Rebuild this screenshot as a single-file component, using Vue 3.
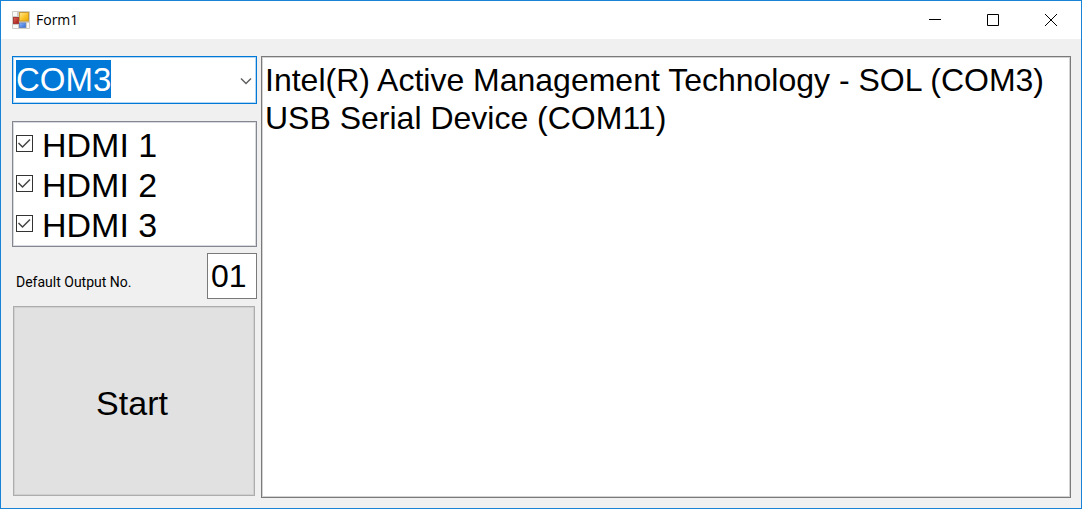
<script setup>
import { ref } from 'vue'

const port = ref('COM3')
const ports = ['COM3', 'COM11']
const outputs = ref([
  { name: 'HDMI 1', on: true },
  { name: 'HDMI 2', on: true },
  { name: 'HDMI 3', on: true },
])
const defaultOutput = ref('01')
const log = ref('Intel(R) Active Management Technology - SOL (COM3)\nUSB Serial Device (COM11)')
</script>

<template>
  <div class="window">
    <header class="titlebar">
      <svg class="app-icon" width="18" height="18" viewBox="0 0 18 18" aria-hidden="true">
        <defs>
          <linearGradient id="gold" x1="0" y1="0" x2="1" y2="1">
            <stop offset="0" stop-color="#ffe9a0" /><stop offset=".5" stop-color="#fdc62d" /><stop offset="1" stop-color="#e9a700" />
          </linearGradient>
          <linearGradient id="red" x1="0" y1="0" x2="1" y2="1">
            <stop offset="0" stop-color="#e06a5c" /><stop offset="1" stop-color="#a41414" />
          </linearGradient>
          <linearGradient id="blue" x1="0" y1="0" x2="1" y2="1">
            <stop offset="0" stop-color="#8fb8fa" /><stop offset="1" stop-color="#2d69d8" />
          </linearGradient>
        </defs>
        <rect width="18" height="18" rx="1" fill="#cfccc6" />
        <rect x="1" y="1" width="4" height="4" fill="#f8f8f8" />
        <rect x="1" y="14" width="5" height="3" fill="#f8f8f8" />
        <rect x="15" y="12" width="2" height="5" fill="#f8f8f8" />
        <rect x="7.5" y="1.5" width="9" height="8.5" fill="url(#gold)" stroke="#c79a35" />
        <rect x="1.5" y="6.5" width="5" height="6" fill="url(#red)" stroke="#a63a35" />
        <rect x="7.5" y="12" width="6" height="4.5" fill="url(#blue)" stroke="#6487c8" />
      </svg>
      <h1 class="title">Form1</h1>
      <div class="controls">
        <button type="button" class="control" aria-label="Minimize">
          <svg width="14" height="14" viewBox="0 0 14 14"><path d="M1 6.5H13" /></svg>
        </button>
        <button type="button" class="control" aria-label="Maximize">
          <svg width="14" height="14" viewBox="0 0 14 14"><path d="M1.5 1.5H12.5V12.5H1.5Z" /></svg>
        </button>
        <button type="button" class="control" aria-label="Close">
          <svg width="14" height="14" viewBox="0 0 14 14"><path d="M1 1L13 13M13 1L1 13" /></svg>
        </button>
      </div>
    </header>

    <main class="form">
      <div class="side">
        <div class="combo">
          <select v-model="port" class="port" aria-label="Port">
            <option v-for="p in ports" :key="p" :value="p">{{ p }}</option>
          </select>
          <svg class="chevron" width="12" height="8" viewBox="0 0 12 8" aria-hidden="true"><path d="M1 1.5L6 6.5L11 1.5" /></svg>
        </div>

        <div class="checklist">
          <label v-for="o in outputs" :key="o.name" class="item">
            <input v-model="o.on" type="checkbox" class="tick-input">
            <svg class="tick-box" width="17" height="17" viewBox="0 0 17 17" aria-hidden="true">
              <rect x=".5" y=".5" width="16" height="16" />
              <path v-if="o.on" d="M2.5 8L6.5 12L14 4.5" />
            </svg>
            <span class="item-name">{{ o.name }}</span>
          </label>
        </div>

        <div class="default-row">
          <label class="caption" for="default-output">Default Output No.</label>
          <input id="default-output" v-model="defaultOutput" class="number" type="text">
        </div>

        <button type="button" class="start">Start</button>
      </div>

      <textarea v-model="log" class="log" aria-label="Log" spellcheck="false"></textarea>
    </main>
  </div>
</template>

<style>
body {
  margin: 0;
}
</style>

<style scoped>
.window {
  box-sizing: border-box;
  min-height: 100vh;
  display: flex;
  flex-direction: column;
  border: 1px solid #1883d7;
  background: #f0f0f0;
  color: #000;
  font-family: "Liberation Sans", Arial, sans-serif;
  font-size: 34px;
}
.titlebar {
  display: flex;
  align-items: center;
  height: 38px;
  padding: 0 1px 0 11px;
  background: #fff;
}
.app-icon {
  margin-right: 6px;
}
.title {
  flex: 1;
  margin: 0;
  font: 400 14px/20px "Open Sans", sans-serif;
}
.controls {
  display: flex;
  align-self: stretch;
}
.control {
  display: flex;
  align-items: center;
  justify-content: center;
  width: 58px;
  padding: 0;
  border: 0;
  background: none;
}
.control path {
  fill: none;
  stroke: #000;
}
.form {
  flex: 1;
  display: grid;
  grid-template-columns: 245px 1fr;
  gap: 4px;
  padding: 17px 10px 10px 11px;
}
.side {
  display: flex;
  flex-direction: column;
}
.combo {
  box-sizing: border-box;
  display: flex;
  align-items: flex-start;
  justify-content: space-between;
  height: 48px;
  padding: 3px 4px 0 3px;
  border: 1px solid #0078d7;
  box-shadow: inset 0 0 0 1px #b3d7f3;
  background: #fff;
}
.port {
  appearance: none;
  field-sizing: content;
  height: 38px;
  padding: 0;
  border: 0;
  border-radius: 0;
  outline: 0;
  background: #0078d7;
  color: #fff;
  font: inherit;
  font-size: 33px;
}
.chevron {
  margin-top: 17px;
}
.chevron path {
  fill: none;
  stroke: #606060;
  stroke-width: 1.5;
}
.checklist {
  margin-top: 17px;
  padding: 1px 3px 3px;
  border: 1px solid #828790;
  box-shadow: inset 0 0 0 1px #d8dadd;
  background: #fff;
}
.item {
  position: relative;
  display: flex;
  align-items: center;
  gap: 9px;
  height: 40px;
}
.item-name {
  padding-top: 4px;
  line-height: 36px;
}
.tick-input {
  position: absolute;
  width: 17px;
  height: 17px;
  margin: 0;
  opacity: 0;
}
.tick-box {
  fill: #fff;
  stroke: #333;
}
.tick-box path {
  fill: none;
  stroke: #444;
  stroke-width: 1.5;
}
.default-row {
  display: flex;
  align-items: center;
  justify-content: space-between;
  margin-top: 6px;
  padding-left: 4px;
}
.caption {
  padding-top: 12px;
  font-family: Roboto, sans-serif;
  font-size: 14px;
  line-height: 18px;
}
.number {
  box-sizing: border-box;
  width: 50px;
  height: 46px;
  padding: 0 3px;
  border: 1px solid #7a7a7a;
  border-radius: 0;
  outline: 0;
  background: #fff;
  color: #000;
  font: inherit;
  font-size: 32px;
}
.start {
  flex: 1;
  margin: 7px 2px 2px 1px;
  padding: 4px 4px 0 0;
  border: 1px solid #adadad;
  box-shadow: inset 0 0 0 1px #d0d0d0;
  background: #e1e1e1;
  color: #000;
  font: inherit;
}
.log {
  box-sizing: border-box;
  width: 100%;
  height: 100%;
  margin: 0;
  padding: 4px 3px;
  border: 1px solid #7a7a7a;
  box-shadow: inset 0 0 0 1px #d3d3d3;
  outline: 0;
  resize: none;
  background: #fff;
  color: #000;
  font: inherit;
  font-size: 32px;
  line-height: 38px;
}
</style>
